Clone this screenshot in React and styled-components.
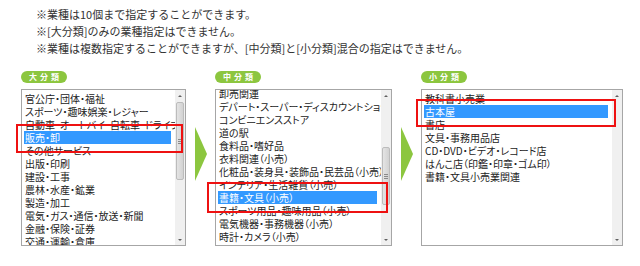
import styled, { createGlobalStyle } from 'styled-components';

const GlobalStyle = createGlobalStyle`
  body {
    margin: 0;
    background: #fff;
    font-family: "Noto Sans CJK JP", "Noto Sans", sans-serif;
  }
`;

const Page = styled.div`
  width: 640px;
  height: 266px;
  overflow: hidden;
`;

const Notes = styled.ul`
  list-style: none;
  margin: 0;
  padding: 6px 0 0 36px;
`;

const Note = styled.li`
  font-size: 11px;
  line-height: 17px;
  color: #333;
  white-space: nowrap;
`;

const Selectors = styled.div`
  display: flex;
  align-items: flex-start;
  margin-top: 14px;
  padding-left: 21px;
`;

const Column = styled.div`
  display: flex;
  flex-direction: column;
  gap: 6px;
  width: ${p => p.$width}px;
`;

const Label = styled.div`
  width: 46px;
  height: 12px;
  border-radius: 6px;
  background: #8cc63f;
  color: #fff;
  font-size: 8px;
  font-weight: bold;
  line-height: 12px;
  letter-spacing: 3px;
  text-indent: 3px;
  text-align: center;
`;

const ListBox = styled.div`
  position: relative;
  display: flex;
  height: 157px;
  border: 1px solid #a6a6a6;
  box-sizing: border-box;
  background: #fff;
`;

const Viewport = styled.div`
  flex: 1;
  min-width: 0;
  overflow: hidden;
  padding: 2px 4px 0 2px;
`;

const Options = styled.ul`
  list-style: none;
  margin: ${p => -p.$scroll}px 0 0;
  padding: 0;
`;

const Option = styled.li`
  height: 13px;
  line-height: 13px;
  padding-left: 1px;
  font-size: 10px;
  font-feature-settings: "palt";
  white-space: nowrap;
  color: ${p => (p.$selected ? '#fff' : '#222')};
  background: ${p => (p.$selected ? '#3399ff' : 'transparent')};
`;

const Scrollbar = styled.div`
  display: flex;
  flex-direction: column;
  width: 10px;
  background: #f0f0f0;
`;

const ScrollButton = styled.div`
  height: 11px;
  display: flex;
  align-items: center;
  justify-content: center;

  &::before {
    content: '';
    border-left: 2px solid transparent;
    border-right: 2px solid transparent;
    ${p => (p.$dir === 'up' ? 'border-bottom' : 'border-top')}: 2px solid #606060;
  }
`;

const Track = styled.div`
  flex: 1;
`;

const Thumb = styled.div`
  display: flex;
  align-items: center;
  justify-content: center;
  margin: ${p => p.$offset}px 1px 0;
  height: ${p => p.$size}px;
  border: 1px solid #bcbcbc;
  border-radius: 2px;
  box-sizing: border-box;
  background: linear-gradient(to right, #e4e4e4, #d2d2d2);

  &::before {
    content: '';
    width: 4px;
    height: 3px;
    border-top: 1px solid #8a8a8a;
    border-bottom: 1px solid #8a8a8a;
    background: linear-gradient(#8a8a8a, #8a8a8a) center / 4px 1px no-repeat;
  }
`;

const Highlight = styled.div`
  position: absolute;
  top: ${p => p.$top}px;
  left: ${p => p.$left}px;
  width: ${p => p.$width}px;
  height: ${p => p.$height}px;
  border: 2px solid #ee1111;
  box-sizing: border-box;
  pointer-events: none;
`;

const ArrowSlot = styled.div`
  width: 29px;
  padding: 56px 0 0 9px;
  box-sizing: border-box;
`;

function Arrow() {
  return (
    <ArrowSlot>
      <svg width="12" height="54" viewBox="0 0 12 54">
        <polygon points="0,0 12,27 0,54" fill="#8cc63f" />
      </svg>
    </ArrowSlot>
  );
}

const groups = [
  {
    label: '大分類',
    width: 165,
    scroll: 0,
    selected: 3,
    thumb: { offset: 1, size: 78 },
    mark: { top: 34, left: -6, width: 167, height: 29 },
    items: [
      '官公庁・団体・福祉',
      'スポーツ・趣味娯楽・レジャー',
      '自動車・オートバイ・自転車・ドライブ',
      '販売・卸',
      'その他サービス',
      '出版・印刷',
      '建設・工事',
      '農林・水産・鉱業',
      '製造・加工',
      '電気・ガス・通信・放送・新聞',
      '金融・保険・証券',
      '交通・運輸・倉庫',
    ],
  },
  {
    label: '中分類',
    width: 177,
    scroll: 5,
    selected: 8,
    thumb: { offset: 46, size: 58 },
    mark: { top: 92, left: -9, width: 181, height: 31 },
    items: [
      '卸売関連',
      'デパート・スーパー・ディスカウントショップ',
      'コンビニエンスストア',
      '道の駅',
      '食料品・嗜好品',
      '衣料関連（小売）',
      '化粧品・装身具・装飾品・民芸品（小売）',
      'インテリア・生活雑貨（小売）',
      '書籍・文具（小売）',
      'スポーツ用品・趣味用品（小売）',
      '電気機器・事務機器（小売）',
      '時計・カメラ（小売）',
    ],
  },
  {
    label: '小分類',
    width: 202,
    scroll: 0,
    selected: 1,
    thumb: null,
    mark: { top: 9, left: -6, width: 200, height: 28 },
    items: [
      '教科書小売業',
      '古本屋',
      '書店',
      '文具・事務用品店',
      'CD・DVD・ビデオ・レコード店',
      'はんこ店（印鑑・印章・ゴム印）',
      '書籍・文具小売業関連',
    ],
  },
];

function Selector({ group }) {
  return (
    <Column $width={group.width}>
      <Label>{group.label}</Label>
      <ListBox>
        <Viewport>
          <Options $scroll={group.scroll}>
            {group.items.map((item, i) => (
              <Option key={item} $selected={i === group.selected}>
                {item}
              </Option>
            ))}
          </Options>
        </Viewport>
        <Scrollbar>
          <ScrollButton $dir="up" />
          <Track>
            {group.thumb && <Thumb $offset={group.thumb.offset} $size={group.thumb.size} />}
          </Track>
          <ScrollButton $dir="down" />
        </Scrollbar>
        <Highlight
          $top={group.mark.top}
          $left={group.mark.left}
          $width={group.mark.width}
          $height={group.mark.height}
        />
      </ListBox>
    </Column>
  );
}

export default function App() {
  return (
    <Page>
      <GlobalStyle />
      <Notes>
        <Note>※業種は10個まで指定することができます。</Note>
        <Note>※[大分類]のみの業種指定はできません。</Note>
        <Note>※業種は複数指定することができますが、[中分類]と[小分類]混合の指定はできません。</Note>
      </Notes>
      <Selectors>
        <Selector group={groups[0]} />
        <Arrow />
        <Selector group={groups[1]} />
        <Arrow />
        <Selector group={groups[2]} />
      </Selectors>
    </Page>
  );
}
